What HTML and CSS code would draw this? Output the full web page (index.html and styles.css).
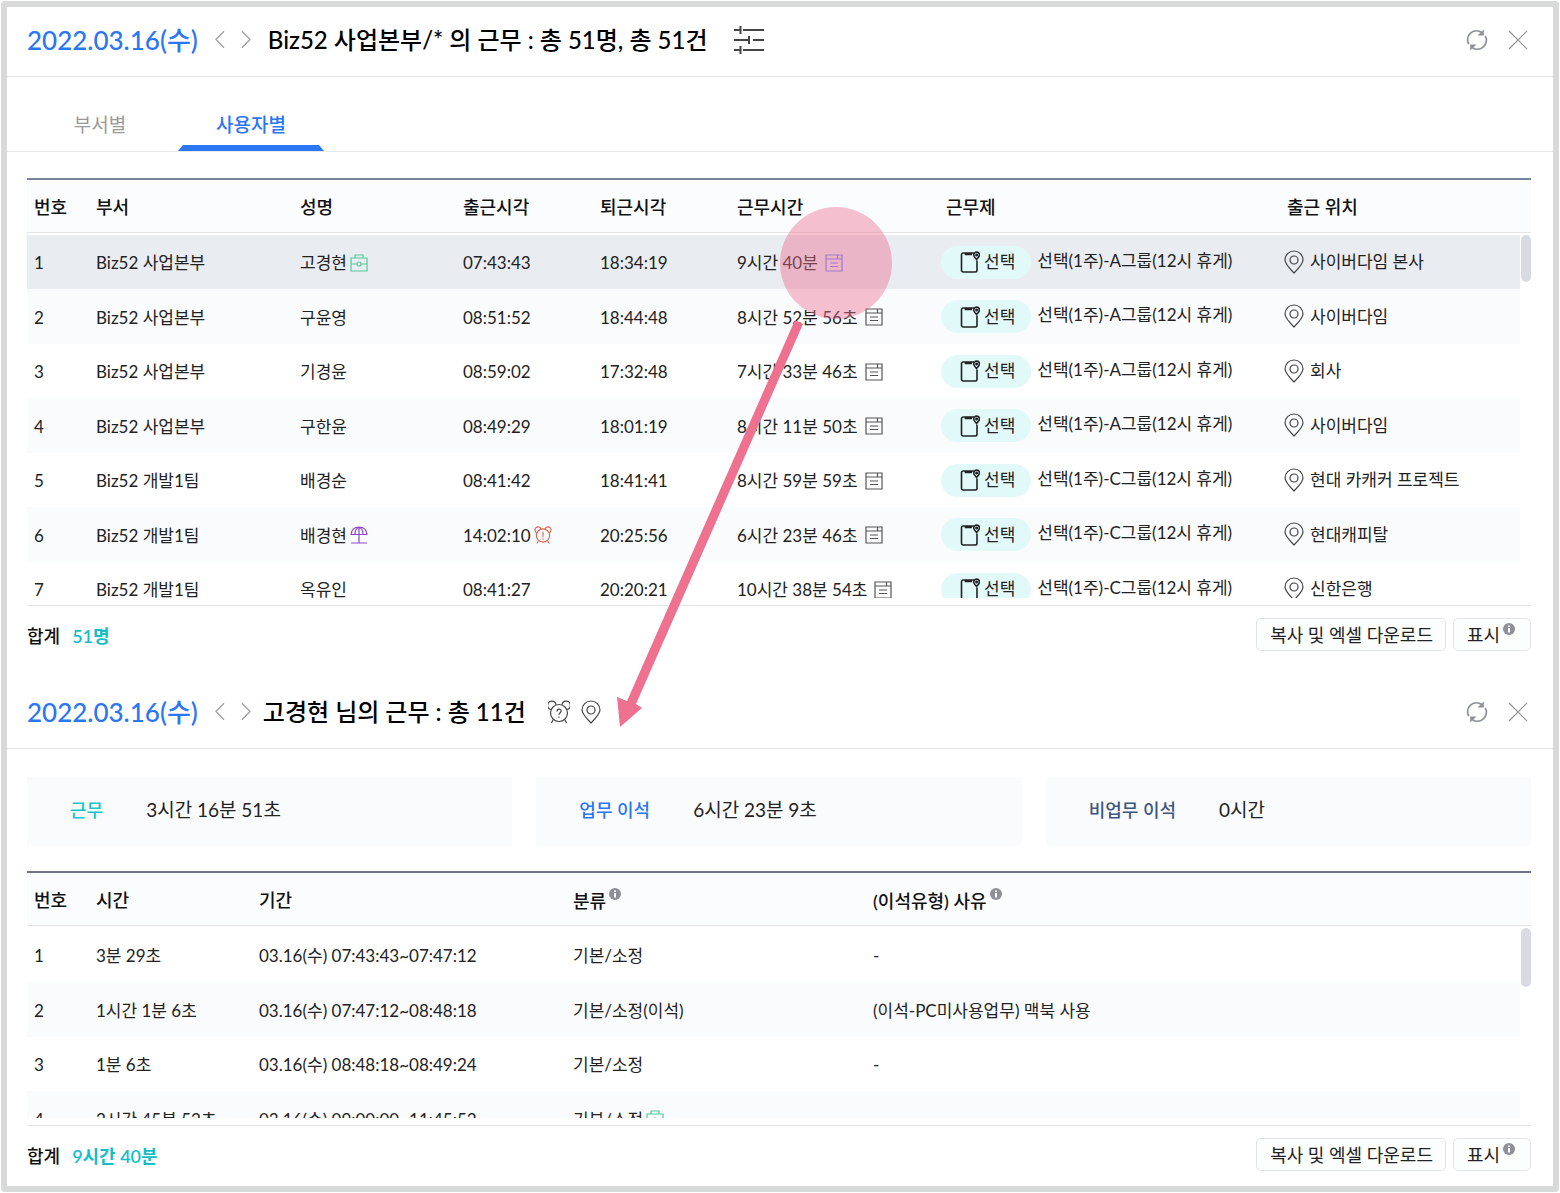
FILE: index.html
```html
<!DOCTYPE html>
<html lang="ko">
<head>
  <meta charset="UTF-8" />
  <meta name="viewport" content="width=device-width, initial-scale=1.0"/>
  <title>근무 현황</title>
  <link rel="stylesheet" href="styles.css">
</head>
<body>
  <!-- icon set -->
  <svg class="defs" aria-hidden="true">
    <symbol id="prev" viewBox="0 0 12 20"><path d="M11 1 L2 10 L11 19"/></symbol>
    <symbol id="next" viewBox="0 0 12 20"><path d="M1 1 L10 10 L1 19"/></symbol>
    <symbol id="filter" viewBox="0 0 30 30"><path d="M0 5h6M9 5h21M6.500 1v8M0 15h14M19 15h11M15 11v8M0 25h6M9 25h21M6.500 21v8"/></symbol>
    <symbol id="refresh" viewBox="0 0 24 24"><path d="M3 16.500A9.800 9.800 0 0 1 17 3.600M21 7.500A9.800 9.800 0 0 1 7 20.400"/><path class="fill" d="M19.500 0.500v6.500h-7zM4.500 23.500v-6.500h7z"/></symbol>
    <symbol id="close" viewBox="0 0 20 20"><path d="M1 1 L19 19 M19 1 L1 19"/></symbol>
    <symbol id="case" viewBox="0 0 18 18"><path d="M1 4h16v13H1zM5 4V1h8v3M1 10h6M11 10h6"/><circle cx="9" cy="10" r="2"/></symbol>
    <symbol id="parasol" viewBox="0 0 18 18"><path d="M1 8.500C1.500 4 4.500 1 9 1s7.500 3 8 7.500zM5 8.500C5 5 6.500 2 9 1c2.500 1 4 4 4 7.500M9 1v16M1 17h16"/></symbol>
    <symbol id="late" viewBox="0 0 18 19"><circle cx="9" cy="10" r="7"/><path d="M2.300 7A3.200 3.200 0 1 1 6.800 3.200M15.700 7A3.200 3.200 0 1 0 11.200 3.200M4 16l-1.500 2.500M14 16l1.500 2.500M9 6v5.500M9 13v1.500"/></symbol>
    <symbol id="ask" viewBox="0 0 22 24"><circle cx="11" cy="13" r="8.500"/><path d="M3 9.500A4.200 4.200 0 1 1 8 4.800M19 9.500A4.200 4.200 0 1 0 14 4.800M5 20l-1.500 3M17 20l1.500 3M9 11.500c0-3 4.200-3 4.200-.4 0 1.700-2.200 1.700-2.200 3.700M11 16.500v1.300"/></symbol>
    <symbol id="log" viewBox="0 0 18 18"><path d="M1 1h16v16H1zM1 5h16M12.500 1v3.500M5 9h8M5 12.500h8"/></symbol>
    <symbol id="phone" viewBox="0 0 20 22"><path d="M14 2H3.200A1.700 1.700 0 0 0 1.500 3.700v15.600A1.700 1.700 0 0 0 3.200 21h12.100a1.700 1.700 0 0 0 1.700-1.700V9.500M5.500 2v1.500h6.500"/><path d="M16.500 8.500C14.300 6.300 13.700 5.300 13.700 4a2.900 2.900 0 0 1 5.800 0c0 1.300-.8 2.300-3 4.500z"/><circle cx="16.600" cy="4" r=".7"/></symbol>
    <symbol id="pin" viewBox="0 0 20 24"><path d="M10 23C4 17 1 13.500 1 10a9 9 0 0 1 18 0c0 3.500-3 7-9 13z"/><circle cx="10" cy="10" r="4"/></symbol>
    <symbol id="info" viewBox="0 0 12 12"><circle class="fill" cx="6" cy="6" r="6"/><path class="mark" d="M6 2.500v1.500M6 5v4.500"/></symbol>
  </svg>

  <main class="frame">
    <section class="panel">
      <header class="bar">
        <span class="date">2022.03.16(수)</span>
        <button class="icon-btn nav" aria-label="이전"><svg class="i-arrow"><use href="#prev"/></svg></button>
        <button class="icon-btn nav" aria-label="다음"><svg class="i-arrow"><use href="#next"/></svg></button>
        <h1>Biz52 사업본부/* 의 근무 : 총 51명, 총 51건</h1>
        <button class="icon-btn filter" aria-label="필터"><svg class="i-filter"><use href="#filter"/></svg></button>
        <div class="tools">
          <button class="icon-btn" aria-label="새로고침"><svg class="i-refresh"><use href="#refresh"/></svg></button>
          <button class="icon-btn" aria-label="닫기"><svg class="i-close"><use href="#close"/></svg></button>
        </div>
      </header>

      <nav class="tabs">
        <a href="#dept">부서별</a>
        <a href="#user" class="active">사용자별</a>
      </nav>

      <div class="list">
        <div class="scroll scroll-users">
          <table class="users">
            <colgroup>
              <col class="c-no"><col class="c-dept"><col class="c-name"><col class="c-time"><col class="c-time"><col class="c-work"><col class="c-type"><col>
            </colgroup>
            <thead>
              <tr><th>번호</th><th>부서</th><th>성명</th><th>출근시각</th><th>퇴근시각</th><th>근무시간</th><th>근무제</th><th>출근 위치</th></tr>
            </thead>
            <tbody>
              <tr class="selected">
                <td>1</td><td>Biz52 사업본부</td><td>고경현<svg class="i-tag case"><use href="#case"/></svg></td><td>07:43:43</td><td>18:34:19</td>
                <td>9시간 40분<svg class="i-log"><use href="#log"/></svg></td>
                <td><span class="pill"><svg class="i-phone"><use href="#phone"/></svg>선택</span>선택(1주)-A그룹(12시 휴게)</td>
                <td><svg class="i-pin"><use href="#pin"/></svg>사이버다임 본사</td>
              </tr>
              <tr>
                <td>2</td><td>Biz52 사업본부</td><td>구윤영</td><td>08:51:52</td><td>18:44:48</td>
                <td>8시간 52분 56초<svg class="i-log"><use href="#log"/></svg></td>
                <td><span class="pill"><svg class="i-phone"><use href="#phone"/></svg>선택</span>선택(1주)-A그룹(12시 휴게)</td>
                <td><svg class="i-pin"><use href="#pin"/></svg>사이버다임</td>
              </tr>
              <tr>
                <td>3</td><td>Biz52 사업본부</td><td>기경윤</td><td>08:59:02</td><td>17:32:48</td>
                <td>7시간 33분 46초<svg class="i-log"><use href="#log"/></svg></td>
                <td><span class="pill"><svg class="i-phone"><use href="#phone"/></svg>선택</span>선택(1주)-A그룹(12시 휴게)</td>
                <td><svg class="i-pin"><use href="#pin"/></svg>회사</td>
              </tr>
              <tr>
                <td>4</td><td>Biz52 사업본부</td><td>구한윤</td><td>08:49:29</td><td>18:01:19</td>
                <td>8시간 11분 50초<svg class="i-log"><use href="#log"/></svg></td>
                <td><span class="pill"><svg class="i-phone"><use href="#phone"/></svg>선택</span>선택(1주)-A그룹(12시 휴게)</td>
                <td><svg class="i-pin"><use href="#pin"/></svg>사이버다임</td>
              </tr>
              <tr>
                <td>5</td><td>Biz52 개발1팀</td><td>배경순</td><td>08:41:42</td><td>18:41:41</td>
                <td>8시간 59분 59초<svg class="i-log"><use href="#log"/></svg></td>
                <td><span class="pill"><svg class="i-phone"><use href="#phone"/></svg>선택</span>선택(1주)-C그룹(12시 휴게)</td>
                <td><svg class="i-pin"><use href="#pin"/></svg>현대 카캐커 프로젝트</td>
              </tr>
              <tr>
                <td>6</td><td>Biz52 개발1팀</td><td>배경현<svg class="i-tag parasol"><use href="#parasol"/></svg></td><td>14:02:10<svg class="i-tag late"><use href="#late"/></svg></td><td>20:25:56</td>
                <td>6시간 23분 46초<svg class="i-log"><use href="#log"/></svg></td>
                <td><span class="pill"><svg class="i-phone"><use href="#phone"/></svg>선택</span>선택(1주)-C그룹(12시 휴게)</td>
                <td><svg class="i-pin"><use href="#pin"/></svg>현대캐피탈</td>
              </tr>
              <tr>
                <td>7</td><td>Biz52 개발1팀</td><td>옥유인</td><td>08:41:27</td><td>20:20:21</td>
                <td>10시간 38분 54초<svg class="i-log"><use href="#log"/></svg></td>
                <td><span class="pill"><svg class="i-phone"><use href="#phone"/></svg>선택</span>선택(1주)-C그룹(12시 휴게)</td>
                <td><svg class="i-pin"><use href="#pin"/></svg>신한은행</td>
              </tr>
            </tbody>
          </table>
        </div>
        <div class="thumb thumb-users"></div>
      </div>

      <footer class="total">
        <strong>합계</strong>
        <strong class="sum">51명</strong>
        <div class="actions">
          <button>복사 및 엑셀 다운로드</button>
          <button>표시<svg class="i-info"><use href="#info"/></svg></button>
        </div>
      </footer>
    </section>

    <section class="panel">
      <header class="bar">
        <span class="date">2022.03.16(수)</span>
        <button class="icon-btn nav" aria-label="이전"><svg class="i-arrow"><use href="#prev"/></svg></button>
        <button class="icon-btn nav" aria-label="다음"><svg class="i-arrow"><use href="#next"/></svg></button>
        <h2>고경현 님의 근무 : 총 11건</h2>
        <button class="icon-btn ask" aria-label="근무 확인"><svg class="i-ask"><use href="#ask"/></svg></button>
        <button class="icon-btn where" aria-label="위치"><svg class="i-where"><use href="#pin"/></svg></button>
        <div class="tools">
          <button class="icon-btn" aria-label="새로고침"><svg class="i-refresh"><use href="#refresh"/></svg></button>
          <button class="icon-btn" aria-label="닫기"><svg class="i-close"><use href="#close"/></svg></button>
        </div>
      </header>

      <div class="cards">
        <div class="card"><strong class="teal">근무</strong><span>3시간 16분 51초</span></div>
        <div class="card"><strong class="blue">업무 이석</strong><span>6시간 23분 9초</span></div>
        <div class="card"><strong class="navy">비업무 이석</strong><span>0시간</span></div>
      </div>

      <div class="list list-log">
        <div class="scroll scroll-log">
          <table>
            <colgroup>
              <col class="c-no"><col class="c-name"><col class="c-period"><col class="c-class"><col>
            </colgroup>
            <thead>
              <tr><th>번호</th><th>시간</th><th>기간</th><th>분류<svg class="i-info"><use href="#info"/></svg></th><th>(이석유형) 사유<svg class="i-info"><use href="#info"/></svg></th></tr>
            </thead>
            <tbody>
              <tr><td>1</td><td>3분 29초</td><td>03.16(수) 07:43:43~07:47:12</td><td>기본/소정</td><td>-</td></tr>
              <tr><td>2</td><td>1시간 1분 6초</td><td>03.16(수) 07:47:12~08:48:18</td><td>기본/소정(이석)</td><td>(이석-PC미사용업무) 맥북 사용</td></tr>
              <tr><td>3</td><td>1분 6초</td><td>03.16(수) 08:48:18~08:49:24</td><td>기본/소정</td><td>-</td></tr>
              <tr><td>4</td><td>2시간 45분 52초</td><td>03.16(수) 09:00:00~11:45:52</td><td>기본/소정<svg class="i-tag case"><use href="#case"/></svg></td><td>-</td></tr>
            </tbody>
          </table>
        </div>
        <div class="thumb thumb-log"></div>
      </div>

      <footer class="total">
        <strong>합계</strong>
        <strong class="sum">9시간 40분</strong>
        <div class="actions">
          <button>복사 및 엑셀 다운로드</button>
          <button>표시<svg class="i-info"><use href="#info"/></svg></button>
        </div>
      </footer>
    </section>

    <!-- highlight on the selected work time, pointing at its detail panel -->
    <svg class="callout" viewBox="0 0 280 524" aria-hidden="true">
      <circle cx="223" cy="57" r="56"/>
      <path d="M182 114 L190 118 L23 498 L29 502 L7 521 L4 491 L14 495 Z"/>
    </svg>
  </main>
</body>
</html>
```
FILE: styles.css
```css
* {
  box-sizing: border-box;
}
body {
  margin: 0;
  padding: 1px;
  background: #fff;
  color: #222;
  font-family: Lato, 'Noto Sans CJK KR', sans-serif;
  font-size: 17px;
  line-height: 24px;
}
button {
  font: inherit;
  color: inherit;
  cursor: pointer;
}
svg {
  fill: none;
  stroke: currentColor;
  stroke-width: 1.2;
}
.defs {
  display: none;
}
.fill {
  fill: currentColor;
  stroke: none;
}
.mark {
  stroke: #fff;
  stroke-width: 2;
}
.frame {
  position: relative;
  border: 6px solid #d8d9d9;
  border-radius: 4px;
}

/* title bar */
.bar {
  display: flex;
  align-items: center;
  height: 70px;
  padding: 0 25px 4px 20px;
  border-bottom: 1px solid #e6e7e8;
}
.date, h1, h2 {
  margin: 0;
  font-size: 24px;
  line-height: 36px;
  font-weight: 500;
}
.date {
  font-size: 26px;
  color: #2b76f3;
}
h1, h2 {
  color: #000;
}
h1 {
  margin-left: 16px;
}
h2 {
  margin-left: 11px;
}
.icon-btn {
  display: flex;
  padding: 0;
  border: 0;
  background: none;
  color: #444;
}
.nav {
  margin-left: 16px;
  color: #999;
}
.filter {
  margin-left: 27px;
}
.ask {
  margin-left: 22px;
}
.where {
  margin-left: 11px;
}
.tools {
  display: flex;
  align-items: center;
  gap: 20px;
  margin-left: auto;
}
.tools .icon-btn {
  color: #8f9399;
}
.i-arrow {
  width: 11px;
  height: 19px;
}
.i-filter {
  width: 30px;
  height: 30px;
  stroke-width: 2;
}
.i-refresh {
  width: 22px;
  height: 22px;
  stroke-width: 2;
}
.i-close {
  width: 20px;
  height: 20px;
}
.i-ask {
  width: 22px;
  height: 24px;
}
.i-where {
  width: 20px;
  height: 24px;
}

/* tabs */
.tabs {
  display: flex;
  align-items: flex-end;
  gap: 5px;
  height: 75px;
  padding-left: 20px;
  border-bottom: 1px solid #e6e7e8;
}
.tabs a {
  position: relative;
  width: 146px;
  height: 54px;
  padding-top: 16px;
  color: #999;
  font-size: 19px;
  text-align: center;
  text-decoration: none;
}
.tabs .active {
  color: #2b76f3;
  font-weight: 500;
}
.tabs .active::after {
  content: "";
  position: absolute;
  left: 0;
  right: 0;
  bottom: 0;
  height: 6px;
  background: #2b76f3;
  clip-path: polygon(5px 0, calc(100% - 5px) 0, 100% 100%, 0 100%);
}

/* tables */
.list {
  position: relative;
  margin: 26px 22px 0 20px;
  padding-bottom: 7px;
  border-top: 2px solid #75839b;
  border-bottom: 1px solid #e2e4e6;
}
.list-log {
  margin-top: 25px;
  border-top-color: #717386;
}
.scroll {
  overflow-y: auto;
  scrollbar-width: none;
}
.scroll-users {
  height: 418px;
}
.scroll-log {
  height: 245px;
}
table {
  width: 100%;
  table-layout: fixed;
  border-spacing: 0;
}
.c-no { width: 62px; }
.c-dept { width: 204px; }
.c-name { width: 163px; }
.c-time { width: 137px; }
.c-work { width: 209px; }
.c-type { width: 341px; }
.c-period { width: 314px; }
.c-class { width: 300px; }
th, td {
  padding: 2px 0 0 7px;
  text-align: left;
  white-space: nowrap;
}
th {
  position: sticky;
  top: 0;
  height: 53px;
  background: #fafcfd;
  border-bottom: 1px solid #e2e4e6;
  color: #111;
  font-size: 18px;
  font-weight: 500;
}
td {
  height: 54px;
}
td:last-child {
  border-right: 11px solid #fff;
}
tbody tr:nth-child(even) td {
  height: 55px;
  background: #fafbfd;
}
tbody tr:first-child td {
  height: 56px;
  border-top: 2px solid #fff;
}
.selected td {
  background: #e9ecf0;
}
.users td:nth-child(7) {
  padding: 0 0 0 2px;
}
.users td:nth-child(8) {
  padding: 0 0 0 4px;
}
td svg {
  vertical-align: middle;
}
.i-tag {
  width: 18px;
  height: 18px;
  margin: -4px 0 0 3px;
}
.case { color: #55c99c; }
.parasol { color: #9048cf; }
.late { color: #e0604a; }
.i-log {
  width: 18px;
  height: 18px;
  margin: -4px 0 0 7px;
  color: #555;
}
.selected .i-log {
  color: #6a7ff0;
}
.pill {
  display: inline-flex;
  align-items: center;
  gap: 4px;
  height: 33px;
  margin-right: 6px;
  padding: 0 16px 0 19px;
  border-radius: 17px;
  background: #e2f9fa;
  vertical-align: middle;
}
.i-phone {
  width: 20px;
  height: 22px;
  stroke-width: 1.6;
}
.i-pin {
  width: 20px;
  height: 24px;
  margin: -4px 6px 0 0;
  color: #444;
}
.thumb {
  position: absolute;
  top: 55px;
  right: 0;
  width: 10px;
  border-radius: 5px;
  background: #d9dbe3;
}
.thumb-users {
  height: 47px;
}
.thumb-log {
  height: 59px;
}
.i-info {
  width: 12px;
  height: 12px;
  margin: 0 0 8px 3px;
  color: #8e9099;
}

/* totals */
.total {
  display: flex;
  align-items: center;
  gap: 12px;
  padding: 12px 22px 28px 20px;
}
.panel:last-of-type .total {
  padding-bottom: 15px;
}
.total strong {
  padding-top: 3px;
  color: #111;
  font-size: 18px;
  font-weight: 500;
}
.total .sum {
  color: #13bec8;
  font-weight: 600;
}
.actions {
  display: flex;
  gap: 7px;
  margin-left: auto;
}
.actions button {
  display: flex;
  align-items: center;
  min-width: 78px;
  height: 33px;
  padding: 0 12px 0 13px;
  border: 1px solid #e2e4e7;
  border-radius: 5px;
  background: #fcfdfd;
  font-size: 18px;
}
.actions .i-info {
  margin-bottom: 12px;
}

/* summary cards */
.cards {
  display: grid;
  grid-template-columns: repeat(3, 1fr);
  gap: 24px;
  padding: 28px 22px 0 20px;
}
.card {
  display: flex;
  align-items: center;
  gap: 43px;
  height: 69px;
  padding: 0 43px 3px;
  background: #fafbfd;
  font-size: 19px;
}
.card strong {
  font-size: 18px;
  font-weight: 500;
}
.teal { color: #13c4cc; }
.blue { color: #2b76f3; }
.navy { color: #3d5680; }

.callout {
  position: absolute;
  left: 606px;
  top: 199px;
  width: 280px;
  height: 524px;
  stroke: none;
  pointer-events: none;
}
.callout circle {
  fill: #ec7091;
  fill-opacity: 0.43;
}
.callout path {
  fill: #ee718f;
}
```
